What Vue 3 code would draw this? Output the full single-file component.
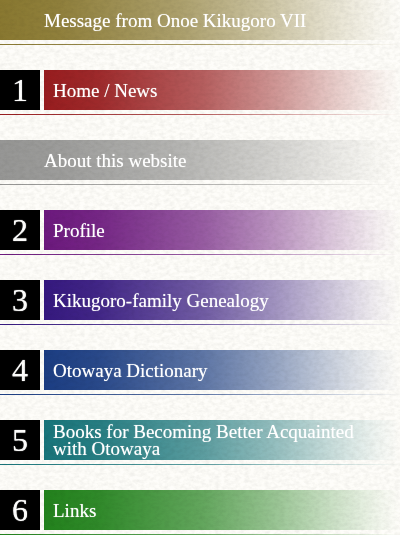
<script setup>
const items = [
  { label: 'Message from Onoe Kikugoro VII', tone: 'gold' },
  { number: 1, label: 'Home / News', tone: 'red' },
  { label: 'About this website', tone: 'gray' },
  { number: 2, label: 'Profile', tone: 'purple' },
  { number: 3, label: 'Kikugoro-family Genealogy', tone: 'indigo' },
  { number: 4, label: 'Otowaya Dictionary', tone: 'blue' },
  { number: 5, label: 'Books for Becoming Better Acquainted with Otowaya', tone: 'teal' },
  { number: 6, label: 'Links', tone: 'green' },
]
</script>

<template>
  <nav class="menu" aria-label="Main">
    <ul class="list">
      <li v-for="item in items" :key="item.label" class="item" :class="item.tone">
        <a href="#" class="link">
          <span v-if="item.number" class="number">{{ item.number }}</span>
          <span class="bar" :class="{ plain: !item.number }">
            <span class="label">{{ item.label }}</span>
          </span>
        </a>
        <div class="rule"></div>
      </li>
    </ul>
    <!-- Washi paper grain laid over the whole menu -->
    <svg class="grain" aria-hidden="true">
      <filter id="paper" x="0" y="0" width="100%" height="100%" color-interpolation-filters="sRGB">
        <feTurbulence type="fractalNoise" baseFrequency="0.2 0.3" numOctaves="3" seed="8" />
        <feColorMatrix
          type="matrix"
          values="0.1 0 0 0 0.935
                  0.1 0 0 0 0.935
                  0.1 0 0 0 0.93
                  0 0 0 0 1"
        />
      </filter>
      <rect width="100%" height="100%" filter="url(#paper)" />
    </svg>
  </nav>
</template>

<style>
body {
  margin: 0;
  background: #fefdfa;
}
</style>

<style scoped>
.menu {
  position: relative;
  overflow: hidden;
  background: #fefdfa;
  font-family: "Liberation Serif", "Times New Roman", serif;
}

.list {
  display: flex;
  flex-direction: column;
  gap: 25px;
  margin: 0;
  padding: 0;
  list-style: none;
}

.link {
  display: flex;
  gap: 4px;
  height: 40px;
  color: #fff;
  text-decoration: none;
}

.number {
  display: flex;
  flex: none;
  align-items: center;
  justify-content: center;
  width: 40px;
  background: #000;
  font-size: 32px;
  line-height: 40px;
  text-shadow: 0 0 1px #fff;
}

.bar {
  display: flex;
  flex: 1;
  align-items: center;
  min-width: 0;
  padding: 0 8px 0 9px;
  background: linear-gradient(
    to right,
    rgb(var(--tone)) 0%,
    rgb(var(--tone) / 0.94) 15%,
    rgb(var(--tone) / 0.7) 45%,
    rgb(var(--tone) / 0.46) 65%,
    rgb(var(--tone) / 0.22) 82%,
    rgb(var(--tone) / 0.06) 94%,
    rgb(var(--tone) / 0) 100%
  );
}

.bar.plain {
  padding-left: 44px;
}

.label {
  position: relative;
  z-index: 2;
  font-size: 19px;
  line-height: 17px;
  text-shadow: 0 0 1px rgb(255 255 255 / 0.6);
}

.rule {
  height: 1px;
  margin-top: 4px;
  background: linear-gradient(to right, rgb(var(--tone)), rgb(var(--tone) / 0.7) 50%, rgb(var(--tone) / 0));
}

.grain {
  position: absolute;
  inset: 0;
  z-index: 1;
  width: 100%;
  height: 100%;
  mix-blend-mode: multiply;
  pointer-events: none;
}

.gold { --tone: 137 120 48; }
.red { --tone: 152 28 30; }
.gray { --tone: 150 150 149; }
.purple { --tone: 108 24 126; }
.indigo { --tone: 53 24 128; }
.blue { --tone: 27 61 131; }
.teal { --tone: 24 117 123; }
.green { --tone: 34 130 28; }
</style>
